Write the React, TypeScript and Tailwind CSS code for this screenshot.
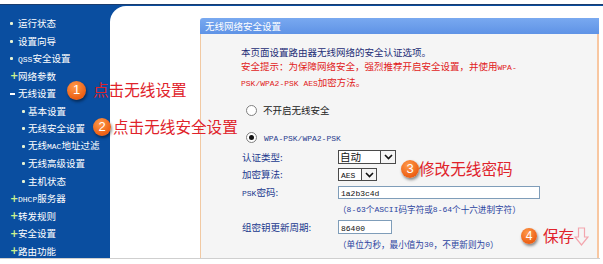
import React from "react";

const L = ({ children }: { children: React.ReactNode }) => (
  <span className="font-['Liberation_Mono',monospace] text-[8px]">{children}</span>
);

type Item = { t: React.ReactNode; m: "dot" | "plus" | "minus"; sub?: boolean };

const items: Item[] = [
  { t: "运行状态", m: "dot" },
  { t: "设置向导", m: "dot" },
  { t: <><L>QSS</L>安全设置</>, m: "dot" },
  { t: "网络参数", m: "plus" },
  { t: "无线设置", m: "minus" },
  { t: "基本设置", m: "dot", sub: true },
  { t: "无线安全设置", m: "dot", sub: true },
  { t: <>无线<L>MAC</L>地址过滤</>, m: "dot", sub: true },
  { t: "无线高级设置", m: "dot", sub: true },
  { t: "主机状态", m: "dot", sub: true },
  { t: <><L>DHCP</L>服务器</>, m: "plus" },
  { t: "转发规则", m: "plus" },
  { t: "安全设置", m: "plus" },
  { t: "路由功能", m: "plus" },
];

function Marker({ m }: { m: Item["m"] }) {
  if (m === "dot") return <span className="w-[3px] h-[3px] bg-[#e6f3d4] rounded-[1px]" />;
  if (m === "plus")
    return <span className="text-[#cdf28e] text-[10px] leading-none font-bold font-['DejaVu_Sans',sans-serif]">+</span>;
  return <span className="w-[5px] h-[2px] bg-white" />;
}

function Circle({ n, cls }: { n: string; cls: string }) {
  return (
    <span
      className={`rounded-full bg-[radial-gradient(circle_at_40%_30%,#ff9a4a,#ec5f14_70%)] text-white flex items-center justify-center font-['Liberation_Sans',sans-serif] shadow-[1px_2px_3px_rgba(0,0,0,0.45)] shrink-0 ${cls}`}
    >
      {n}
    </span>
  );
}

function Chevron() {
  return (
    <svg width="9" height="6" viewBox="0 0 9 6">
      <path d="M1 1 L4.5 4.5 L8 1" fill="none" stroke="#111" strokeWidth="1.6" />
    </svg>
  );
}

export default function App() {
  return (
    <div className="w-[603px] h-[264px] bg-white relative overflow-hidden font-['Noto_Sans_CJK_SC',sans-serif]">
      <div className="mt-[4px] h-[254px] flex bg-[#0a4ea0] border-t border-[#1b3d6e]">
        <aside className="w-[110px] pt-[10px] text-white text-[9.5px]">
          {items.map((it, i) => (
            <div key={i} className={`h-[17.5px] flex items-center ${it.sub ? "pl-[22px]" : "pl-[10px]"}`}>
              <span className="w-[7px] flex items-center">
                <Marker m={it.m} />
              </span>
              <span className={`${it.sub ? "ml-[-1px]" : "ml-[1px]"} leading-none whitespace-nowrap`}>{it.t}</span>
            </div>
          ))}
        </aside>
        <main className="flex-1 bg-white rounded-tl-[16px] mt-[1px] pl-[90px] pt-[12px] pr-[4px]">
          <div className="w-[399px] h-[240px] flex flex-col">
            <div className="h-[16px] bg-[linear-gradient(#79a9f0,#5f93e6)] rounded-tl-[3px] text-white text-[9.5px] pl-[5px] flex items-center">
              无线网络安全设置
            </div>
            <div className="flex-1 bg-[#f5f5f5] border-l border-l-[#f1c9a3] border-r-[2px] border-r-[#f8c7a1] pl-[40px] pt-[11px] text-[9.5px] text-[#1d2d76]">
              <div className="leading-[14px]">本页面设置路由器无线网络的安全认证选项。</div>
              <div className="leading-[14px] text-[#e11b1b]">
                安全提示：为保障网络安全，强烈推荐开启安全设置，并使用<L>WPA-</L>
              </div>
              <div className="leading-[14px] text-[#e11b1b]">
                <L>PSK/WPA2-PSK AES</L>加密方法。
              </div>
              <div className="mt-[10.5px] h-[18px] flex items-center pl-[5px]">
                <span className="w-[11px] h-[11px] rounded-full border border-[#808080] bg-white" />
                <span className="ml-[6px] text-[#222]">不开启无线安全</span>
              </div>
              <div className="mt-[8.5px] h-[18px] flex items-center pl-[5px]">
                <span className="w-[11px] h-[11px] rounded-full border border-[#808080] bg-white flex items-center justify-center">
                  <span className="w-[5px] h-[5px] rounded-full bg-[#111]" />
                </span>
                <span className="ml-[7px] text-[#2b3e8f]">
                  <L>WPA-PSK/WPA2-PSK</L>
                </span>
              </div>
              <div className="mt-[2.25px] text-[#21398e]">
                <div className="h-[17.5px] flex items-center">
                  <span className="w-[97px] pl-[1px]">认证类型:</span>
                  <div className="w-[58px] h-[14px] border border-[#4a4a4a] bg-white flex">
                    <span className="flex-1 text-[10.5px] leading-[12px] pl-[1px] text-[#111]">自动</span>
                    <span className="w-[15px] border-l border-[#4a4a4a] flex items-center justify-center bg-[#f4f4f4]">
                      <Chevron />
                    </span>
                  </div>
                </div>
                <div className="h-[17.5px] flex items-center">
                  <span className="w-[97px] pl-[1px]">加密算法:</span>
                  <div className="w-[39px] h-[13px] border border-[#4a4a4a] bg-white flex">
                    <span className="flex-1 leading-[11px] pl-[2px] text-[#111]">
                      <L>AES</L>
                    </span>
                    <span className="w-[15px] border-l border-[#4a4a4a] flex items-center justify-center bg-[#f4f4f4]">
                      <Chevron />
                    </span>
                  </div>
                </div>
                <div className="h-[17.5px] flex items-center">
                  <span className="w-[97px] pl-[1px]">
                    <L>PSK</L>密码:
                  </span>
                  <div className="w-[202px] h-[13px] border border-[#7f9db9] bg-white pl-[2px] leading-[11px] text-[#111]">
                    <L>1a2b3c4d</L>
                  </div>
                </div>
                <div className="h-[17.5px] flex items-center pl-[97px] text-[8.6px] text-[#2c44a0] whitespace-nowrap">
                  （<L>8-63</L>个<L>ASCII</L>码字符或<L>8-64</L>个十六进制字符）
                </div>
                <div className="h-[17.5px] flex items-center">
                  <span className="w-[97px] pl-[1px]">组密钥更新周期:</span>
                  <div className="w-[54px] h-[14px] border border-[#7f9db9] bg-white pl-[2px] leading-[12px] text-[#111]">
                    <L>86400</L>
                  </div>
                </div>
                <div className="h-[17.5px] flex items-center pl-[97px] text-[8.6px] text-[#2c44a0] whitespace-nowrap">
                  （单位为秒，最小值为<L>30</L>，不更新则为<L>0</L>）
                </div>
              </div>
            </div>
          </div>
        </main>
      </div>
      <div className="h-px w-[600px] bg-[#cfcfcf]" />

      {/* annotations */}
      <div className="absolute left-[67px] top-[80px] h-[20px] flex items-center text-[15.6px] text-[#e0232b] whitespace-nowrap">
        <Circle n="1" cls="w-[19px] h-[19px] text-[13px]" />
        <span className="ml-[7px]">点击无线设置</span>
      </div>
      <div className="absolute left-[93px] top-[117px] h-[20px] flex items-center text-[15.6px] text-[#e0232b] whitespace-nowrap">
        <Circle n="2" cls="w-[18px] h-[18px] text-[13px]" />
        <span className="ml-[2px]">点击无线安全设置</span>
      </div>
      <div className="absolute left-[401px] top-[159px] h-[20px] flex items-center text-[15.6px] text-[#e0232b] whitespace-nowrap">
        <Circle n="3" cls="w-[18px] h-[18px] text-[13px]" />
        <span className="ml-[0px]">修改无线密码</span>
      </div>
      <div className="absolute left-[521px] top-[226px] h-[20px] flex items-center text-[15.6px] text-[#e0232b] whitespace-nowrap">
        <Circle n="4" cls="w-[16px] h-[16px] text-[12px]" />
        <span className="ml-[6px]">保存</span>
        <svg className="ml-[0px]" width="15" height="19" viewBox="0 0 15 19">
          <path d="M4.5 1 H10.5 V10 H14 L7.5 18 L1 10 H4.5 Z" fill="none" stroke="#f3a6ae" strokeWidth="1.2" />
        </svg>
      </div>
    </div>
  );
}
